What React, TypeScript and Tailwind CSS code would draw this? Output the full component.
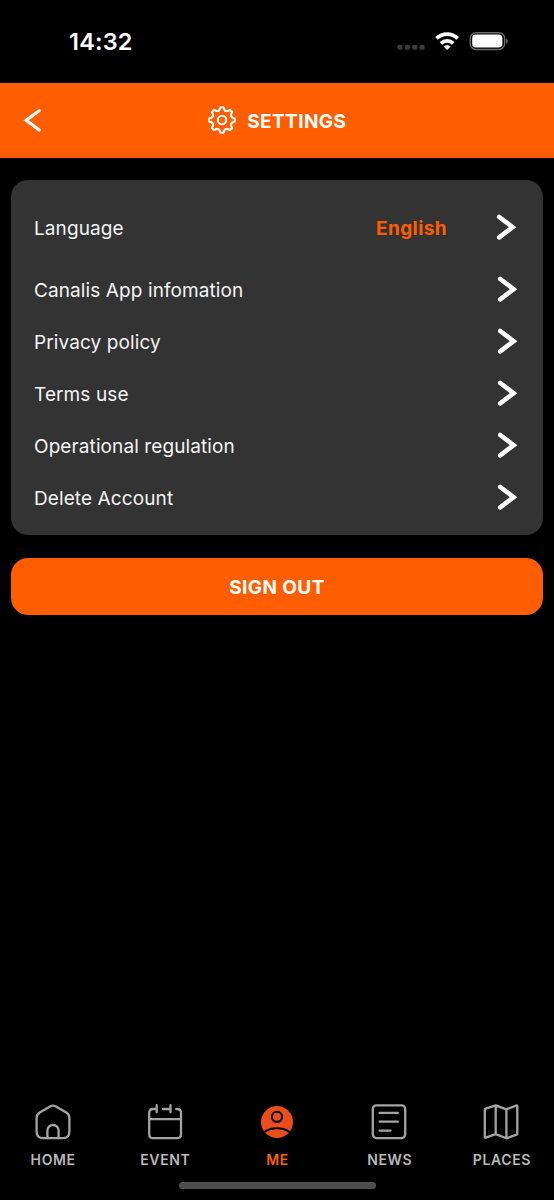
import type { ReactNode } from "react";

function StatusBar() {
  return (
    <div className="flex h-[83px] items-start justify-between pl-[69px] pr-[46px] text-white">
      <span className="mt-[28px] text-[23.5px] font-semibold leading-[28px] tracking-[0.2px]">14:32</span>
      <svg className="mt-[30px]" width="111" height="22" viewBox="397 30 111 22">
        <g fill="#3c3c3c">
          <rect x="397.5" y="44.8" width="5" height="5" rx="1.8" />
          <rect x="405" y="44.8" width="5" height="5" rx="1.8" />
          <rect x="412.3" y="44.8" width="5" height="5" rx="1.8" />
          <rect x="419.6" y="44.8" width="5" height="5" rx="1.8" />
        </g>
        <g fill="none" stroke="#fff" strokeWidth="3.7">
          <path d="M436.5 38.4a15.2 15.2 0 0 1 21.2 0" />
          <path d="M440.9 43.3a9 9 0 0 1 12.4 0" />
        </g>
        <path d="M443.6 46.5a5.2 5.2 0 0 1 7 0l-3.5 3.6z" fill="#fff" />
        <rect x="470.2" y="32.7" width="34.4" height="16.8" rx="5.6" fill="none" stroke="#6b6b6b" strokeWidth="1.4" />
        <rect x="472.2" y="34.6" width="30.2" height="13" rx="3.8" fill="#fff" />
        <path d="M506.2 38.6c2 .9 2 4.2 0 5.1z" fill="#777" />
      </svg>
    </div>
  );
}

const polar = (radius: number, degrees: number) => {
  const a = (degrees * Math.PI) / 180;
  return `${(14 + radius * Math.sin(a)).toFixed(2)} ${(14 - radius * Math.cos(a)).toFixed(2)}`;
};

// Eight squared teeth joined by concave valleys.
const gearPath =
  [0, 45, 90, 135, 180, 225, 270, 315]
    .map(
      (t, i) =>
        `${i === 0 ? "M" : "L"}${polar(12.9, t - 7)}L${polar(12.9, t + 7)}L${polar(11, t + 11.5)}A3.1 3.1 0 0 0 ${polar(11, t + 33.5)}`,
    )
    .join("") + "Z";

function Gear() {
  return (
    <svg width="28" height="28" viewBox="0 0 28 28" fill="none" stroke="#fff" strokeWidth="2.1" strokeLinejoin="round">
      <path d={gearPath} />
      <circle cx="14" cy="14" r="4.2" />
    </svg>
  );
}

function Header() {
  return (
    <header className="grid h-[74.5px] grid-cols-[1fr_auto_1fr] items-center bg-[#ff5e00] text-white">
      <svg className="ml-[21px]" width="22" height="26" viewBox="0 0 22 26" fill="none" stroke="#fff" strokeWidth="3.2" strokeLinecap="round" strokeLinejoin="miter">
        <path d="M18.2 3.8 5.2 13.3l13 9.7" />
      </svg>
      <div className="flex items-center gap-[11.5px]">
        <Gear />
        <h1 className="pt-[3px] text-[19px] font-bold leading-6 tracking-[0.4px]">SETTINGS</h1>
      </div>
    </header>
  );
}

function Chevron() {
  return (
    <svg width="21" height="28" viewBox="0 0 21 28" fill="none" stroke="#fff" strokeWidth="4.6" strokeLinecap="round" strokeLinejoin="miter">
      <path d="M3.2 4 16.6 14.2 3.2 24.4" />
    </svg>
  );
}

const items = ["Canalis App infomation", "Privacy policy", "Terms use", "Operational regulation", "Delete Account"];

function SettingsCard() {
  return (
    <section className="mx-[11px] mt-[22.5px] rounded-[17px] bg-[#333] pb-[12px] pl-[23px] pr-[25px] pt-[11px] text-[19px] leading-6 tracking-[0.1px] text-[#f4f4f4]">
      <div className="flex h-[72px] items-center pr-[1.5px]">
        <span className="flex-1 pt-[3px]">Language</span>
        <span className="mr-[48.5px] pt-[3px] font-bold tracking-[0.4px] text-[#ff5e00]">English</span>
        <Chevron />
      </div>
      {items.map((label) => (
        <div key={label} className="flex h-[52px] items-center justify-between">
          <span className="pt-[3px]">{label}</span>
          <Chevron />
        </div>
      ))}
    </section>
  );
}

function TabIcon({ children }: { children: ReactNode }) {
  return (
    <svg width="40" height="40" viewBox="0 0 40 40" fill="none" stroke="#a3a3a3" strokeWidth="2.3" strokeLinecap="round" strokeLinejoin="round">
      {children}
    </svg>
  );
}

const tabs: { label: string; icon: ReactNode }[] = [
  {
    label: "HOME",
    icon: (
      <>
        <path d="M17.1 4.4 6.7 10.4Q3.6 12.3 3.6 15.8V29.5Q3.6 36.2 10.3 36.2H29.7Q36.4 36.2 36.4 29.5V15.8Q36.4 12.3 33.3 10.4L22.9 4.4Q20 2.9 17.1 4.4Z" />
        <path d="M14.4 36V28.6a5.6 5.6 0 0 1 11.2 0V36" />
      </>
    ),
  },
  {
    label: "EVENT",
    icon: (
      <path d="M11.7 7H8.2Q4.2 7 4.2 11V32.2Q4.2 36.2 8.2 36.2H32Q36 36.2 36 32.2V11Q36 7 32 7H31.2M18 7H25.5M11.7 3.2V10.3M25.5 3.2V10.3M4.2 17.2H36" />
    ),
  },
  {
    label: "ME",
    icon: (
      <>
        <circle cx="20" cy="20" r="16" fill="#e94e1b" stroke="none" />
        <circle cx="20" cy="14.8" r="5.1" stroke="#000" strokeWidth="2.1" />
        <path d="M6.5 30.6Q12.5 26.3 20 26.3T33.5 30.6" stroke="#000" strokeWidth="2" />
      </>
    ),
  },
  {
    label: "NEWS",
    icon: (
      <>
        <rect x="3.8" y="3.3" width="32.4" height="32.8" rx="3.6" />
        <path d="M10.6 10.9H28.8M10.6 19.7H28.8M10.6 28.6H21.6" />
      </>
    ),
  },
  {
    label: "PLACES",
    icon: (
      <path d="M3.8 7.8Q3.8 7 4.6 6.7L14.7 3.4 25.4 7.3 35.3 3.5Q36.3 3.2 36.3 4.2V31.5Q36.3 32.4 35.5 32.7L25.4 36.3 14.7 32.1 4.8 35.6Q3.8 35.9 3.8 35ZM14.7 3.4V32.1M25.4 7.3V36.3" />
    ),
  },
];

function TabBar() {
  return (
    <nav className="-mx-[3.5px] mt-auto grid h-[80px] grid-cols-5">
      {tabs.map(({ label, icon }) => (
        <div key={label} className="flex flex-col items-center">
          <TabIcon>{icon}</TabIcon>
          <span
            className={
              "mt-[8px] pl-px text-[14px] font-semibold leading-5 tracking-[0.6px] " +
              (label === "ME" ? "text-[#ff5e00]" : "text-[#b8b8b8]")
            }
          >
            {label}
          </span>
        </div>
      ))}
    </nav>
  );
}

export default function App() {
  return (
    <div className="flex h-[1200px] w-full flex-col overflow-hidden bg-black font-['Inter',sans-serif]">
      <StatusBar />
      <Header />
      <SettingsCard />
      <button className="mx-[11px] mt-[22.5px] h-[57.5px] rounded-[17px] bg-[#ff5e00] pt-[3px] text-[19px] font-bold tracking-[0.4px] text-white">
        SIGN OUT
      </button>
      <TabBar />
      <div className="mb-[11px] h-[7px] w-[197px] self-center rounded-full bg-[#4e4e4e]" />
    </div>
  );
}
